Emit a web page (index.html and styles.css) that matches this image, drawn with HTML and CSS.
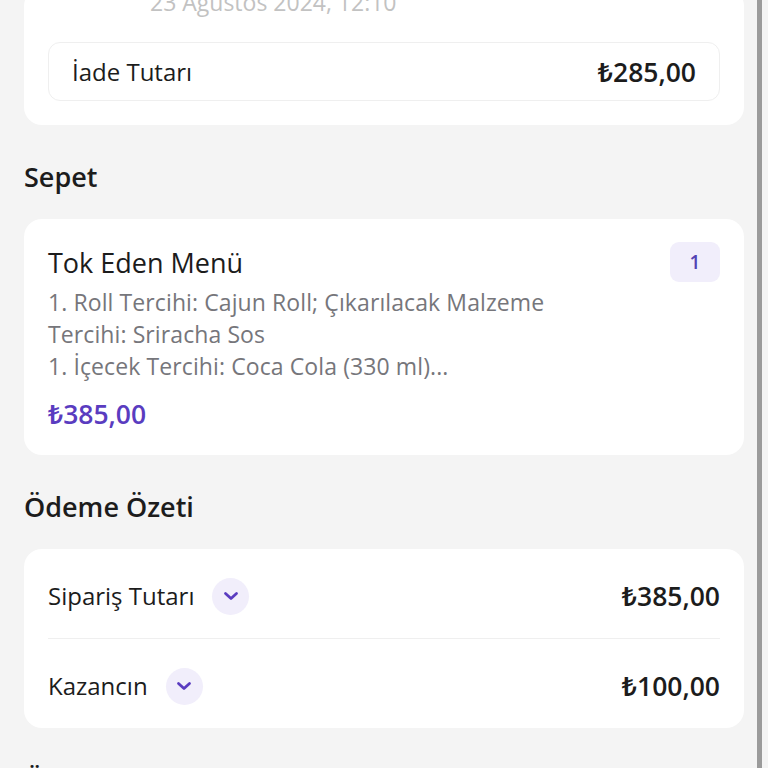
FILE: index.html
```html
<!doctype html>
<html lang="tr">
<head>
<meta charset="utf-8">
<title>Sipariş Detayı</title>
<link rel="stylesheet" href="styles.css">
</head>
<body>
<div class="page">
	<div class="card top-card">
		<div class="date">23 Ağustos 2024, 12:10</div>
		<div class="refund">
			<span class="refund-label">İade Tutarı</span>
			<span class="refund-value">₺285,00</span>
		</div>
	</div>

	<h2 class="section-title">Sepet</h2>
	<div class="card basket">
		<div class="basket-head">
			<span class="basket-name">Tok Eden Menü</span>
			<span class="qty">1</span>
		</div>
		<p class="basket-desc">1. Roll Tercihi: Cajun Roll; Çıkarılacak Malzeme<br>Tercihi: Sriracha Sos<br>1. İçecek Tercihi: Coca Cola (330 ml)...</p>
		<div class="basket-price">₺385,00</div>
	</div>

	<h2 class="section-title">Ödeme Özeti</h2>
	<div class="card summary">
		<div class="sum-row">
			<span class="sum-label">Sipariş Tutarı</span>
			<span class="chev"><svg width="16" height="10" viewBox="0 0 16 10"><path d="M2.5 2.5l5.5 5 5.5-5" fill="none" stroke="#5a3cc0" stroke-width="2.8" stroke-linecap="round" stroke-linejoin="round"/></svg></span>
			<span class="sum-value">₺385,00</span>
		</div>
		<div class="sum-row">
			<span class="sum-label">Kazancın</span>
			<span class="chev"><svg width="16" height="10" viewBox="0 0 16 10"><path d="M2.5 2.5l5.5 5 5.5-5" fill="none" stroke="#5a3cc0" stroke-width="2.8" stroke-linecap="round" stroke-linejoin="round"/></svg></span>
			<span class="sum-value">₺100,00</span>
		</div>
	</div>

	<h2 class="section-title">Ödeme Yöntemi</h2>
</div>
<div class="scroll-bar"></div>
</body>
</html>
```

FILE: styles.css
```css
*{margin:0; padding:0; box-sizing:border-box;}
body{background:#f4f4f4; font-family:"Open Sans","Noto Sans",sans-serif; color:#1c1c1c; overflow:hidden;}
.page{padding:0 24px; width:768px;}
.card{background:#fff; border-radius:18px;}

.top-card{margin-top:-12px; padding:0 24px 24px;}
.date{margin-left:102px; font-size:23px; line-height:28px; color:#c2c2c2;}
.refund{margin-top:26px; height:59px; border:1px solid #efefef; border-radius:12px; padding:0 23px; display:flex; align-items:center; justify-content:space-between;}
.refund-label{font-size:24px; font-weight:500;}
.refund-value{font-size:26.5px; font-weight:600;}

.section-title{font-size:27px; font-weight:600; line-height:32px; margin:36px 0 26px;}

.basket{padding:23px 24px 25px;}
.basket-head{display:flex; justify-content:space-between; align-items:center; height:40px;}
.basket-name{font-size:27px; font-weight:400;}
.qty{width:50px; height:40px; border-radius:9px; background:#f1eefb; color:#5443b3; font-size:19px; font-weight:600; display:flex; align-items:center; justify-content:center;}
.basket-desc{margin-top:4px; font-size:23px; line-height:32px; color:#76767b; letter-spacing:0.1px;}
.basket-price{margin-top:16px; font-size:26.5px; line-height:32px; font-weight:600; color:#5a3cc0;}

.summary{padding:0 24px;}
.sum-row{display:flex; align-items:center; padding:28px 0 23px;}
.sum-row + .sum-row{border-top:1px solid #efefef;}
.sum-label{font-size:24px; font-weight:500; line-height:38px;}
.chev{width:37px; height:37px; border-radius:50%; background:#f1eefb; margin-left:18px; display:flex; align-items:center; justify-content:center;}
.sum-value{margin-left:auto; font-size:26.5px; font-weight:600;}

.scroll-bar{position:fixed; top:0; left:757px; width:5px; height:768px; background:#9b9b9b;}
```
